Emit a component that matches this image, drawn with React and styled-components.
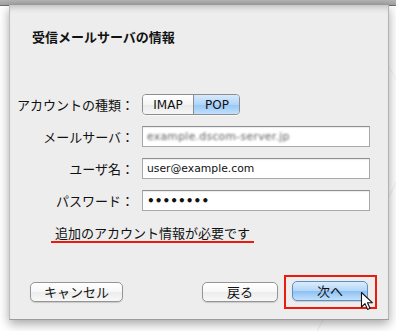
import styled, { createGlobalStyle } from "styled-components";

const Global = createGlobalStyle`
  html, body { margin: 0; padding: 0; }
  body {
    background: #fff;
    font-family: "Lucida Grande", "DejaVu Sans", "Noto Sans CJK JP", sans-serif;
    color: #1b1b1b;
    overflow: hidden;
  }
`;

const Screen = styled.div`
  position: relative;
  width: 396px;
  height: 331px;
  background:
    linear-gradient(118deg, transparent 0 86%, rgba(0,0,0,0.05) 86.2%, transparent 86.5%),
    linear-gradient(60deg, transparent 0 92%, rgba(0,0,0,0.04) 92.2%, transparent 92.5%),
    #fff;
`;

const TopBar = styled.div`
  height: 5px;
  background: linear-gradient(#b4b4b4, #a2a2a2);
  border-bottom: 1px solid #6e6e6e;
`;

const Sheet = styled.div`
  margin: -1px 7px 0 9px;
  width: 380px;
  height: 315px;
  box-sizing: border-box;
  background: #ededed;
  border-left: 1px solid #bdbdbd;
  border-right: 1px solid #b4b4b4;
  border-bottom: 1px solid #9c9c9c;
  box-shadow:
    inset 0 7px 6px -5px rgba(0, 0, 0, 0.22),
    0 4px 10px rgba(0, 0, 0, 0.35);
  padding: 23px 11px 0 0;
  display: flex;
  flex-direction: column;
`;

const Title = styled.h1`
  margin: 0 0 0 22px;
  font-family: "Noto Sans CJK JP", sans-serif;
  font-size: 13px;
  font-weight: 700;
  line-height: 18px;
  color: #111;
`;

const Form = styled.div`
  margin-top: 48px;
  display: grid;
  grid-template-columns: 124px 228px;
  column-gap: 8px;
  row-gap: 11px;
  grid-auto-rows: 21px;
  align-items: center;
`;

const Label = styled.div`
  font-family: "Noto Sans CJK JP", sans-serif;
  font-size: 13px;
  line-height: 21px;
  text-align: right;
  white-space: nowrap;
  color: #111;
`;

const Segmented = styled.div`
  display: flex;
  width: 98px;
  height: 21px;
  box-sizing: border-box;
  border: 1px solid #8d8d8d;
  border-radius: 4px;
  overflow: hidden;
  box-shadow: 0 1px 0 rgba(255, 255, 255, 0.6);
`;

const Segment = styled.div`
  flex: ${({ $w }) => `0 0 ${$w}px`};
  display: flex;
  align-items: center;
  justify-content: center;
  font-size: 12px;
  color: #111;
  background: ${({ $active }) =>
    $active
      ? "linear-gradient(#d6eafd, #b0d5fa 50%, #96c6f6 51%, #c0e0fd)"
      : "linear-gradient(#ffffff, #f4f4f4 50%, #e9e9e9 51%, #f6f6f6)"};
  & + & { border-left: 1px solid #8d8d8d; }
`;

const Field = styled.div`
  height: 21px;
  box-sizing: border-box;
  background: #fff;
  border: 1px solid #a9a9a9;
  border-top-color: #8f8f8f;
  box-shadow: inset 0 1px 1px rgba(0, 0, 0, 0.08);
  display: flex;
  align-items: center;
  padding-left: 4px;
  font-size: 10.8px;
  color: #111;
  white-space: nowrap;
  overflow: hidden;
`;

const Blurred = styled.span`
  color: #5f5f5f;
  filter: blur(1px);
  letter-spacing: 0.3px;
`;

const Dots = styled.span`
  font-size: 12px;
  letter-spacing: 0.1px;
  font-weight: 700;
`;

const Note = styled.div`
  margin: 13px 0 0 41px;
  align-self: flex-start;
  padding: 0 4px;
  font-family: "Noto Sans CJK JP", sans-serif;
  font-size: 13px;
  line-height: 17px;
  color: #111;
  border-bottom: 2px solid #ea1c0d;
`;

const ButtonRow = styled.div`
  margin-top: 32px;
  display: flex;
  align-items: center;
  padding-left: 20px;
`;

const Button = styled.button`
  width: ${({ $w }) => $w}px;
  height: 20px;
  padding: 0;
  border-radius: 5px;
  border: 1px solid ${({ $primary }) => ($primary ? "#5e8fc4" : "#959595")};
  background: ${({ $primary }) =>
    $primary
      ? "linear-gradient(#dcecfc, #b2d5f8 50%, #8cc0f3 51%, #c2e1fd)"
      : "linear-gradient(#ffffff, #f7f7f7 50%, #ececec 51%, #f8f8f8)"};
  box-shadow: 0 1px 1px rgba(0, 0, 0, 0.15);
  font-family: "Noto Sans CJK JP", sans-serif;
  font-size: 13px;
  line-height: 18px;
  color: #111;
`;

const Spacer = styled.div`
  flex: 1;
`;

const Highlight = styled.div`
  position: relative;
  margin-left: 6px;
  padding: 4px 7px 6px 6px;
  border: 2px solid #ee1a0c;
  display: flex;
`;

const Cursor = styled.svg`
  position: absolute;
  left: 74px;
  top: 14px;
  width: 14px;
  height: 20px;
`;

export default function App() {
  return (
    <Screen>
      <Global />
      <TopBar />
      <Sheet>
        <Title>受信メールサーバの情報</Title>
        <Form>
          <Label>アカウントの種類：</Label>
          <Segmented>
            <Segment $w={50}>IMAP</Segment>
            <Segment $w={46} $active>POP</Segment>
          </Segmented>

          <Label>メールサーバ：</Label>
          <Field>
            <Blurred>example.dscom-server.jp</Blurred>
          </Field>

          <Label>ユーザ名：</Label>
          <Field>user@example.com</Field>

          <Label>パスワード：</Label>
          <Field>
            <Dots>••••••••</Dots>
          </Field>
        </Form>

        <Note>追加のアカウント情報が必要です</Note>

        <ButtonRow>
          <Button $w={93}>キャンセル</Button>
          <Spacer />
          <Button $w={76}>戻る</Button>
          <Highlight>
            <Button $w={76} $primary>次へ</Button>
            <Cursor viewBox="0 0 14 20">
              <path
                d="M1.5 1.5 L1.5 16 L5 12.6 L7.6 18.4 L10 17.3 L7.5 11.7 L12.3 11.7 Z"
                fill="#fff"
                stroke="#111"
                strokeWidth="1.1"
                strokeLinejoin="round"
              />
            </Cursor>
          </Highlight>
        </ButtonRow>
      </Sheet>
    </Screen>
  );
}
